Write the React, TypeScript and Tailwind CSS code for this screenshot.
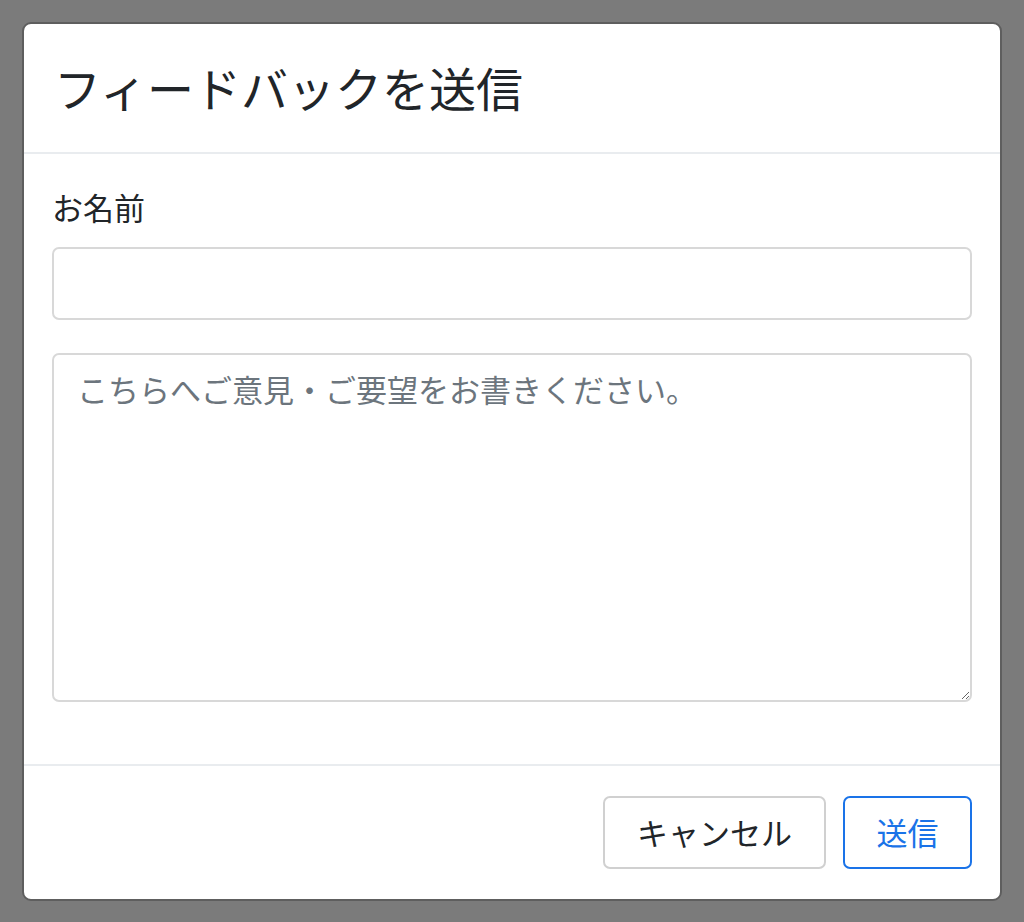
export default function App() {
  const font = { fontFamily: '"Noto Sans CJK JP", "Noto Sans", sans-serif' };
  return (
    <div className="min-h-screen bg-[#7b7b7b] p-[22px]" style={font}>
      <div className="w-[980px] bg-white border-2 border-[#5e5e5e] rounded-[9px] overflow-hidden text-[#212529]">
        <div className="px-[30px] pt-[29px] pb-[31px] border-b-2 border-[#e9ecef]">
          <h4 className="text-[47px] leading-[68px] font-normal m-0">フィードバックを送信</h4>
        </div>
        <div className="px-[28px] pt-[30px] pb-[32px]">
          <label className="block text-[31px] leading-[46px] mb-[17px]">お名前</label>
          <input
            type="text"
            className="block w-full h-[73px] border-2 border-[#d8d8d8] rounded-[7px] px-[23px] text-[31px] outline-none mb-[33px]"
          />
          <textarea
            placeholder="こちらへご意見・ご要望をお書きください。"
            className="block w-full h-[349px] border-2 border-[#d8d8d8] rounded-[7px] px-[23px] py-[11px] text-[31px] leading-[46px] outline-none placeholder:text-[#6c757d] mb-[30px]"
            style={font}
          />
        </div>
        <div className="border-t-2 border-[#e9ecef] px-[28px] py-[30px] flex justify-end gap-[17px]">
          <button className="h-[73px] w-[223px] border-2 border-[#d0d0d0] rounded-[7px] bg-white text-[31px] text-[#212529]">
            キャンセル
          </button>
          <button className="h-[73px] w-[129px] border-2 border-[#1a73e8] rounded-[7px] bg-white text-[31px] text-[#1a73e8]">
            送信
          </button>
        </div>
      </div>
    </div>
  );
}
